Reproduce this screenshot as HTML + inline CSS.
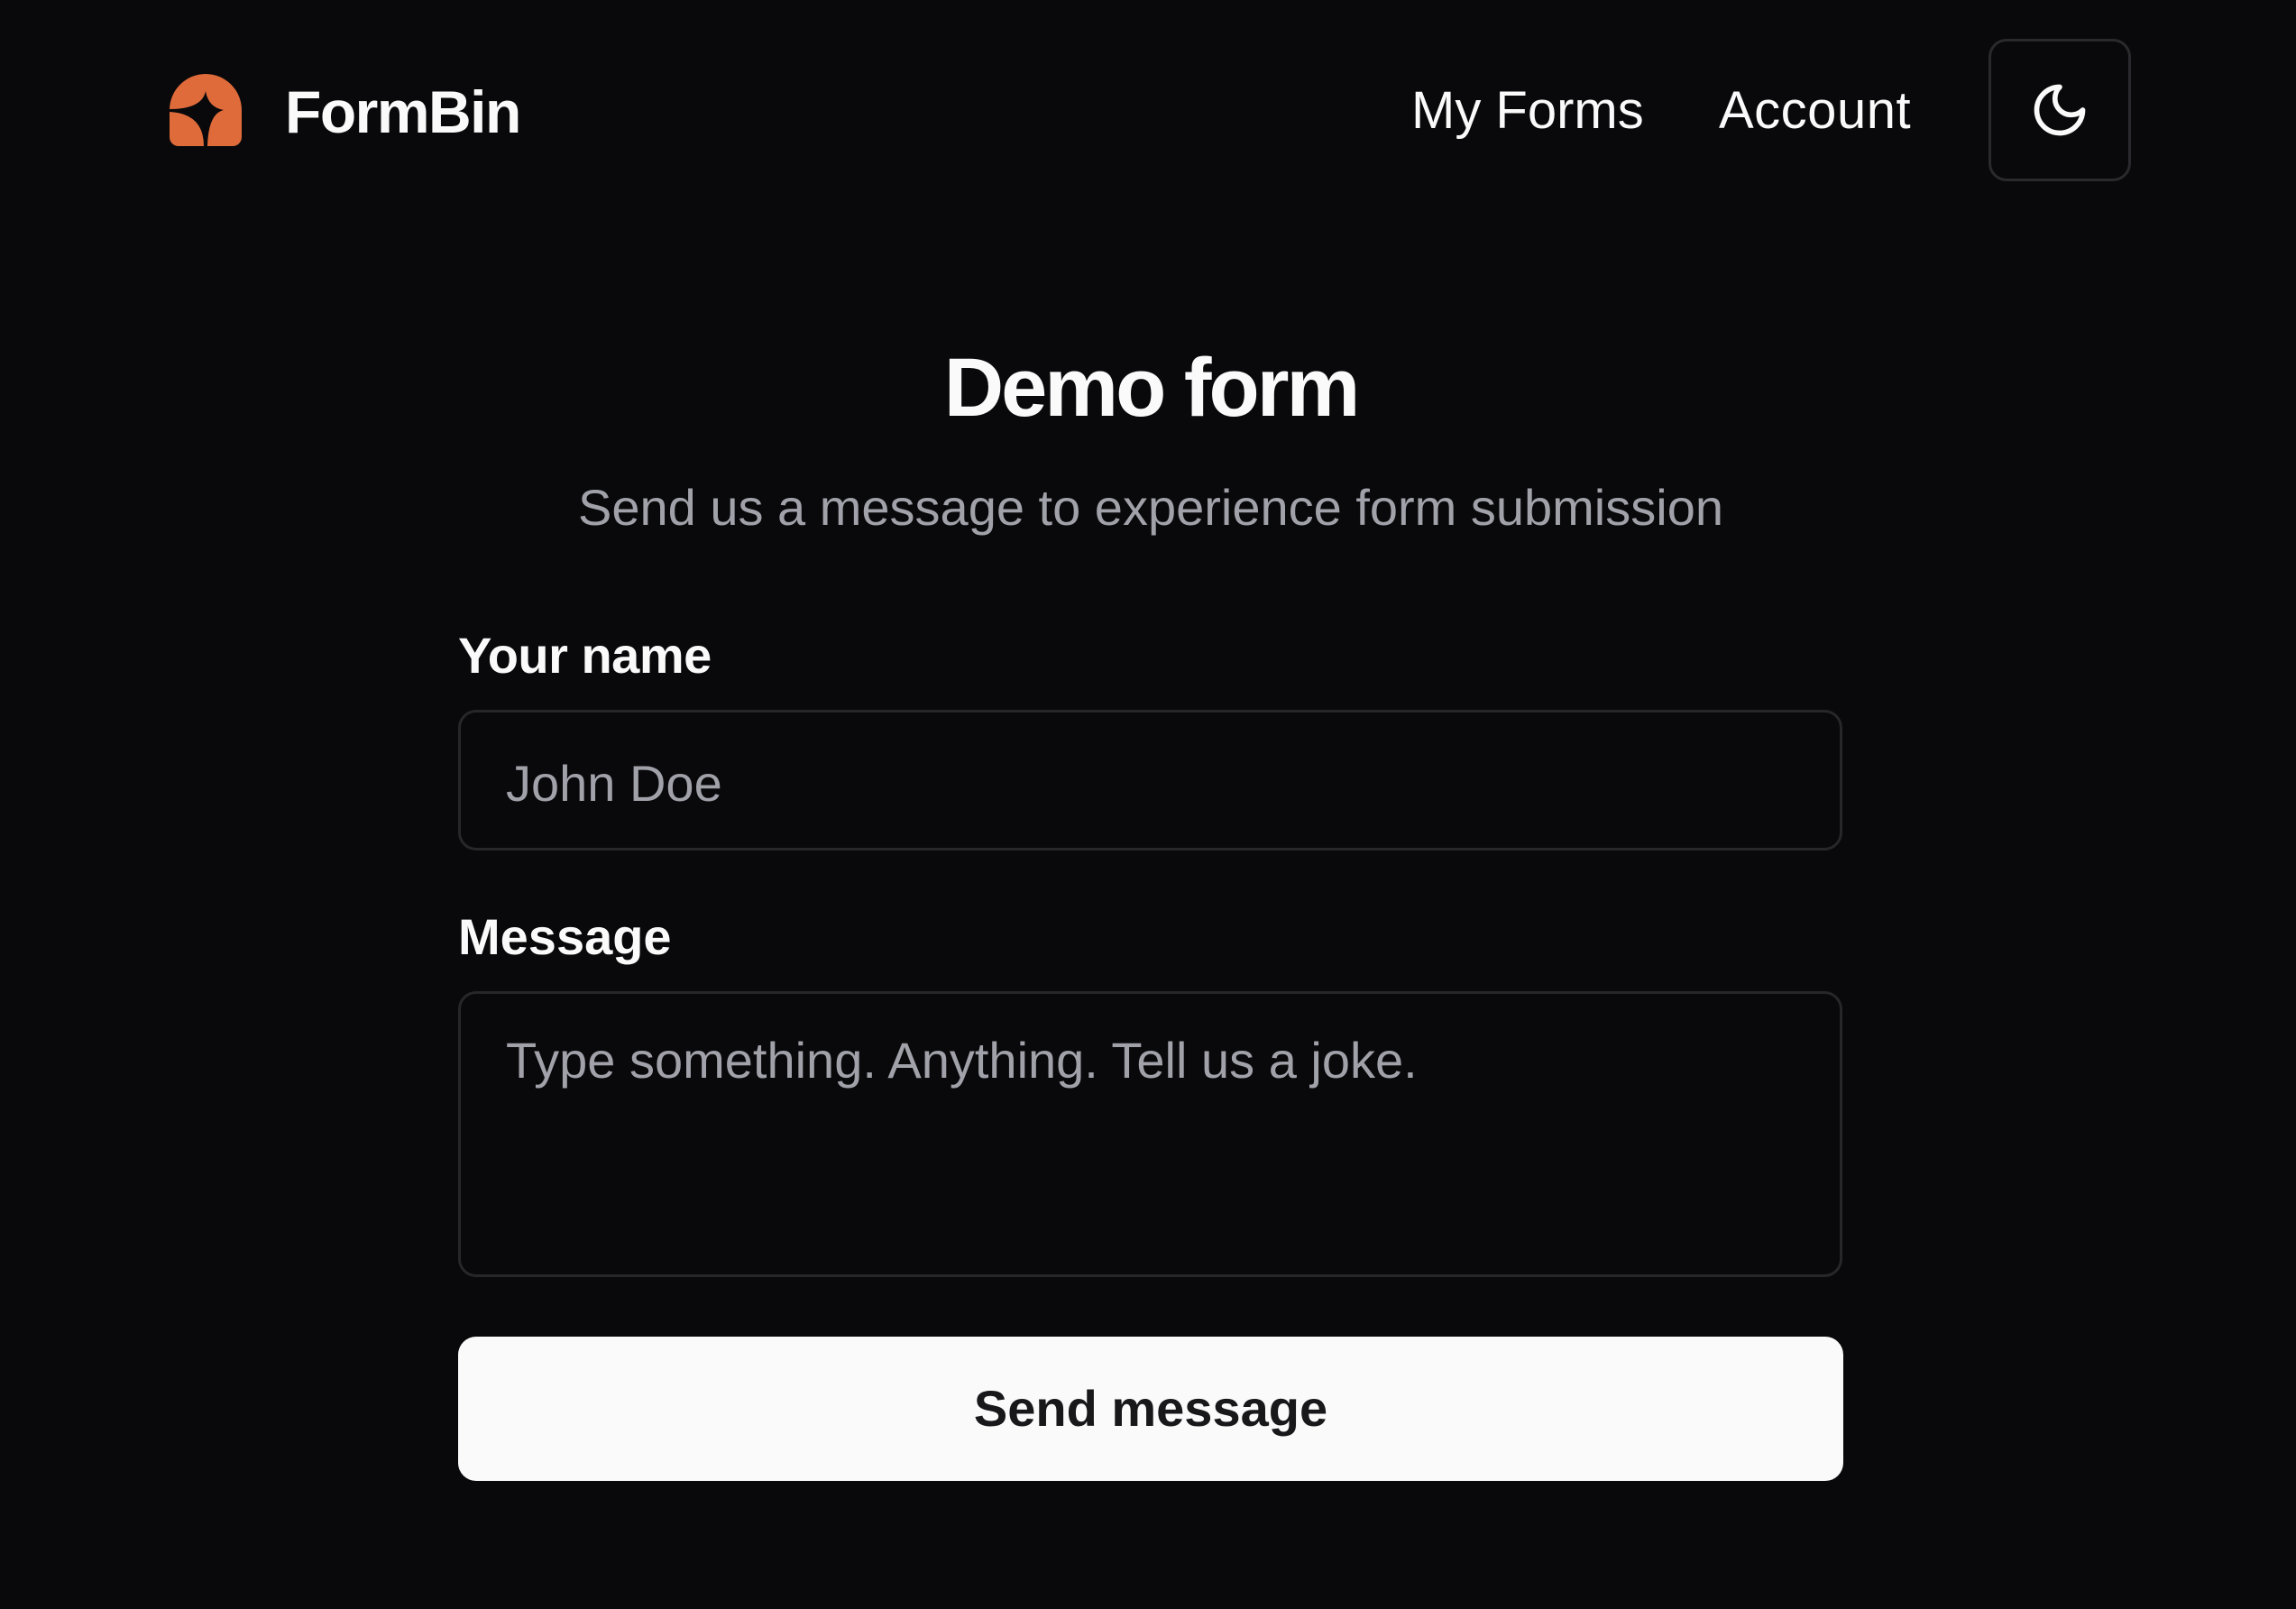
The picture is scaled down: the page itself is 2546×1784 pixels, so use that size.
<!DOCTYPE html>
<html><head><meta charset="utf-8"><style>
*{margin:0;padding:0;box-sizing:border-box}
html,body{width:2546px;height:1784px;background:#09090b;overflow:hidden;font-family:"Liberation Sans",sans-serif;color:#fafafa}
.a{position:absolute;white-space:nowrap}
.box{position:absolute;border:3px solid #27272a;border-radius:20px}
</style></head><body>
<svg class="a" style="left:188px;top:82px" width="80" height="80" viewBox="0 0 80 80">
<path d="M0 40 A40 40 0 0 1 80 40 V70 A10 10 0 0 1 70 80 H10 A10 10 0 0 1 0 70Z" fill="#e06b3a"/>
<path d="M40 19 Q43 37 60 40 Q43 44 42 80 H38 Q38 44 0 42 V39 Q36 39 40 19Z" fill="#09090b"/>
</svg>
<div class="a" style="left:316px;top:84px;font-size:66px;font-weight:bold;line-height:80px;letter-spacing:-1.5px">FormBin</div>
<div class="a" style="left:1565px;top:91px;font-size:58px;line-height:64px">My Forms</div>
<div class="a" style="left:1906px;top:91px;font-size:58px;line-height:64px;letter-spacing:0.5px">Account</div>
<div class="box" style="left:2205px;top:43px;width:158px;height:158px;border-radius:20px;border-color:#2a2a2e"></div>
<svg class="a" style="left:2250px;top:88px" width="68" height="68" viewBox="0 0 24 24" fill="none" stroke="#fafafa" stroke-width="2" stroke-linecap="round" stroke-linejoin="round"><path d="M12 3a6 6 0 0 0 9 9 9 9 0 1 1-9-9Z"/></svg>
<div class="a" style="left:0;width:2552px;top:372px;text-align:center;font-size:92px;font-weight:bold;line-height:116px;letter-spacing:-3px">Demo form</div>
<div class="a" style="left:0;width:2552px;top:530px;text-align:center;font-size:56px;line-height:66px;color:#a1a1aa">Send us a message to experience form submission</div>
<div class="a" style="left:508px;top:693px;font-size:56px;font-weight:bold;line-height:68px;letter-spacing:-0.5px">Your name</div>
<div class="box" style="left:508px;top:787px;width:1535px;height:156px"></div>
<div class="a" style="left:561px;top:835px;font-size:56px;line-height:68px;color:#a1a1aa">John Doe</div>
<div class="a" style="left:508px;top:1005px;font-size:56px;font-weight:bold;line-height:68px">Message</div>
<div class="box" style="left:508px;top:1099px;width:1535px;height:317px"></div>
<div class="a" style="left:561px;top:1142px;font-size:56px;line-height:68px;color:#a1a1aa">Type something. Anything. Tell us a joke.</div>
<div class="a" style="left:508px;top:1482px;width:1536px;height:160px;background:#fafafa;border-radius:20px;color:#18181b;font-size:56px;font-weight:bold;text-align:center;line-height:160px">Send message</div>
</body></html>
